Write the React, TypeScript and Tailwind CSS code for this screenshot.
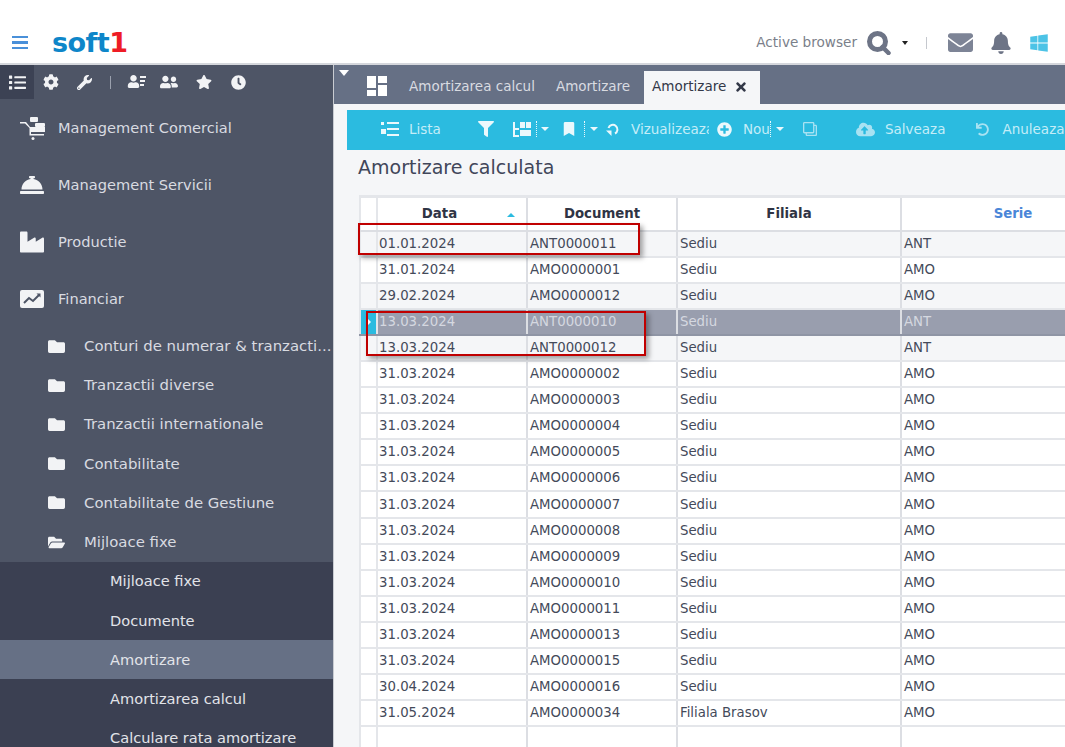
import type { ReactNode } from 'react'
import {
  FaBell,
  FaBookmark,
  FaClock,
  FaCloudUploadAlt,
  FaCog,
  FaConciergeBell,
  FaEnvelope,
  FaFilter,
  FaFolder,
  FaFolderOpen,
  FaIndustry,
  FaList,
  FaPlusCircle,
  FaRegClone,
  FaStar,
  FaTimes,
  FaUndo,
  FaUser,
  FaUserFriends,
  FaWindows,
  FaWrench,
} from 'react-icons/fa'

const rows = [
  ['01.01.2024', 'ANT0000011', 'Sediu', 'ANT'],
  ['31.01.2024', 'AMO0000001', 'Sediu', 'AMO'],
  ['29.02.2024', 'AMO0000012', 'Sediu', 'AMO'],
  ['13.03.2024', 'ANT0000010', 'Sediu', 'ANT'],
  ['13.03.2024', 'ANT0000012', 'Sediu', 'ANT'],
  ['31.03.2024', 'AMO0000002', 'Sediu', 'AMO'],
  ['31.03.2024', 'AMO0000003', 'Sediu', 'AMO'],
  ['31.03.2024', 'AMO0000004', 'Sediu', 'AMO'],
  ['31.03.2024', 'AMO0000005', 'Sediu', 'AMO'],
  ['31.03.2024', 'AMO0000006', 'Sediu', 'AMO'],
  ['31.03.2024', 'AMO0000007', 'Sediu', 'AMO'],
  ['31.03.2024', 'AMO0000008', 'Sediu', 'AMO'],
  ['31.03.2024', 'AMO0000009', 'Sediu', 'AMO'],
  ['31.03.2024', 'AMO0000010', 'Sediu', 'AMO'],
  ['31.03.2024', 'AMO0000011', 'Sediu', 'AMO'],
  ['31.03.2024', 'AMO0000013', 'Sediu', 'AMO'],
  ['31.03.2024', 'AMO0000015', 'Sediu', 'AMO'],
  ['30.04.2024', 'AMO0000016', 'Sediu', 'AMO'],
  ['31.05.2024', 'AMO0000034', 'Filiala Brasov', 'AMO'],
  ['', '', '', ''],
]

const folders = ['Conturi de numerar & tranzacti...', 'Tranzactii diverse', 'Tranzactii internationale', 'Contabilitate', 'Contabilitate de Gestiune']
const subItems = ['Mijloace fixe', 'Documente', 'Amortizare', 'Amortizarea calcul', 'Calculare rata amortizare']

function CartIcon() {
  return (
    <svg viewBox="0 0 26 24" className="w-[26px] h-[24px] fill-[#f2f3f5]">
      <path d="M0 6h6l4 5h15v5H11v2h13v1.6H9.5V12L5 7.6H0z" />
      <rect x="10" y="1" width="8" height="5" rx="1" />
      <rect x="15" y="7" width="10" height="4" rx="1" />
      <circle cx="13" cy="22.5" r="1.5" />
    </svg>
  )
}

function ChartIcon() {
  return (
    <svg viewBox="0 0 24 18" className="w-[24px] h-[18px]">
      <rect width="24" height="18" rx="2" className="fill-[#f2f3f5]" />
      <path d="M4 13l5-5 4 3 6-6" className="fill-none stroke-[#4e5566] stroke-2" />
      <path d="M20.5 3.5v4l-4-4z" className="fill-[#4e5566]" />
    </svg>
  )
}

function SearchIcon() {
  return (
    <svg viewBox="0 0 24 24" className="ml-[10px] w-[24px] h-[24px] shrink-0">
      <circle cx="10.5" cy="10.5" r="8" className="fill-none stroke-[#6d7486] stroke-[5]" />
      <path d="M15.5 16l6 6" className="fill-none stroke-[#6d7486] stroke-[4.5] [stroke-linecap:round]" />
    </svg>
  )
}

function RefreshIcon() {
  return (
    <svg viewBox="0 0 14 14" className="ml-[8px] w-[14px] h-[14px] shrink-0">
      <path d="M2.5 6a4.6 4.6 0 1 1 6.5 5.5" className="fill-none stroke-[#eaf8fc] stroke-2" />
      <path d="M0 8.5h5.5V14z" className="fill-[#eaf8fc]" />
    </svg>
  )
}

function UserListIcon() {
  return (
    <span className="relative w-[19px] h-[14px] flex">
      <FaUser className="text-[13px] text-[#f2f3f5]" />
      <span className="absolute left-[13px] top-[1px] flex flex-col gap-[2px]">
        <span className="w-[6px] h-[2px] bg-[#f2f3f5]" />
        <span className="w-[5px] h-[2px] bg-[#f2f3f5]" />
        <span className="w-[4px] h-[2px] bg-[#f2f3f5]" />
      </span>
    </span>
  )
}

function MenuItem({ icon, label }: { icon: ReactNode; label: string }) {
  return (
    <div className="h-[57px] flex items-center text-[#d9dbe1]">
      <span className="w-[58px] pl-[20px] flex">{icon}</span>
      <span className="text-[14.6px] whitespace-nowrap">{label}</span>
    </div>
  )
}

function FolderItem({ label, open }: { label: string; open?: boolean }) {
  return (
    <div className="h-[39.2px] flex items-center text-[#d9dbe1]">
      <span className="w-[84px] pl-[48px] flex text-[#f2f3f5] text-[17px]">{open ? <FaFolderOpen /> : <FaFolder />}</span>
      <span className="text-[14.9px] whitespace-nowrap">{label}</span>
    </div>
  )
}

function Sidebar() {
  return (
    <aside className="w-[333px] shrink-0 bg-[#4e5566] overflow-hidden">
      <div className="h-[34px] flex items-center text-[#f2f3f5]">
        <span className="w-[34px] h-[34px] bg-[#3c4254] flex items-center justify-center text-[17px]"><FaList /></span>
        <span className="ml-[9px] text-[16px]"><FaCog /></span>
        <span className="ml-[18px] text-[15px]"><FaWrench /></span>
        <span className="ml-[18px] w-[1px] h-[13px] bg-[#9aa0ad]" />
        <span className="ml-[16px]"><UserListIcon /></span>
        <span className="ml-[14px] text-[18px]"><FaUserFriends /></span>
        <span className="ml-[18px] text-[16px]"><FaStar /></span>
        <span className="ml-[19px] text-[15px]"><FaClock /></span>
      </div>
      <MenuItem icon={<CartIcon />} label="Management Comercial" />
      <MenuItem icon={<FaConciergeBell className="text-[24px] text-[#f2f3f5]" />} label="Management Servicii" />
      <MenuItem icon={<FaIndustry className="text-[24px] text-[#f2f3f5]" />} label="Productie" />
      <MenuItem icon={<ChartIcon />} label="Financiar" />
      <div className="-mt-[0.4px]">
        {folders.map((f) => (
          <FolderItem key={f} label={f} />
        ))}
        <FolderItem label="Mijloace fixe" open />
      </div>
      <div className="bg-[#3b4052]">
        {subItems.map((s) => (
          <div
            key={s}
            className={`h-[39.2px] pl-[110px] flex items-center text-[14.6px] text-[#e2e4e9] whitespace-nowrap ${s === 'Amortizare' ? 'bg-[#667085]' : ''}`}
          >
            {s}
          </div>
        ))}
      </div>
    </aside>
  )
}

function Caret({ className }: { className: string }) {
  return <span className={`w-0 h-0 shrink-0 border-x-[4px] border-x-transparent border-t-[4px] ${className}`} />
}

function Toolbar() {
  return (
    <div className="ml-[13px] mt-[6px] h-[40px] pb-[2px] bg-[#2bbbe0] flex items-center text-[#c4edf8] text-[13.5px] whitespace-nowrap overflow-hidden">
      <svg viewBox="0 0 18 15" className="ml-[34px] w-[18px] h-[15px] fill-[#eaf8fc] shrink-0">
        <rect x="0" y="0" width="3" height="3" />
        <rect x="6" y="0" width="12" height="2" />
        <rect x="6" y="6" width="12" height="2" />
        <rect x="6" y="12" width="12" height="2" />
        <path d="M0 7h5v5H0z" />
      </svg>
      <span className="ml-[10px] w-[30px]">Lista</span>
      <FaFilter className="ml-[39px] text-[16px] text-[#eaf8fc] shrink-0" />
      <svg viewBox="0 0 18 15" className="ml-[19px] w-[18px] h-[15px] fill-[#eaf8fc] shrink-0">
        <path d="M0 0h2v6h4v2H2v5h4v2H0z" />
        <rect x="7" y="0" width="5" height="6" />
        <rect x="13" y="0" width="5" height="6" />
        <rect x="7" y="8" width="11" height="6" />
      </svg>
      <span className="ml-[5px] h-[16px] border-l border-dotted border-[#eaf8fc]" />
      <Caret className="ml-[4px] border-t-[#eaf8fc]" />
      <FaBookmark className="ml-[13px] text-[14px] text-[#eaf8fc] shrink-0" />
      <span className="ml-[8px] h-[16px] border-l border-dotted border-[#eaf8fc]" />
      <Caret className="ml-[5px] border-t-[#eaf8fc]" />
      <RefreshIcon />
      <span className="ml-[11px] w-[78px] shrink-0 overflow-hidden">Vizualizeaza</span>
      <FaPlusCircle className="ml-[8px] text-[15px] text-[#eaf8fc] shrink-0" />
      <span className="ml-[11px]">Nou</span>
      <span className="h-[16px] border-l border-dotted border-[#eaf8fc]" />
      <Caret className="ml-[5px] border-t-[#eaf8fc]" />
      <FaRegClone className="ml-[19px] text-[14px] text-[#a8e2f2] shrink-0 -scale-x-100" />
      <FaCloudUploadAlt className="ml-[39px] text-[19px] text-[#a8e2f2] shrink-0" />
      <span className="ml-[10px]">Salveaza</span>
      <FaUndo className="ml-[31px] text-[13px] text-[#a8e2f2] shrink-0" />
      <span className="ml-[13px]">Anuleaza</span>
    </div>
  )
}

function Grid() {
  return (
    <div className="relative ml-[25px] mt-[16px] w-[800px] border-t-[3px] border-[#e4e6ea] text-[13.3px] text-[#444a5a]">
      <div className="h-[34px] flex bg-white border-b-[2px] border-[#dcdee3] font-bold text-[#2f3444]">
        <div className="w-[19px] border-x-[2px] border-[#e4e6ea] shrink-0" />
        <div className="w-[150px] relative flex items-center justify-center border-r-[2px] border-[#dcdee3] pr-[25px]">
          Data
          <span className="absolute right-[11px] top-[15px] w-0 h-0 border-x-[4px] border-x-transparent border-b-[4px] border-b-[#2bbbe0]" />
        </div>
        <div className="w-[150px] flex items-center justify-center border-r-[2px] border-[#dcdee3]">Document</div>
        <div className="w-[224px] flex items-center justify-center border-r-[2px] border-[#dcdee3]">Filiala</div>
        <div className="w-[222px] flex items-center justify-center text-[#4a86d8]">Serie</div>
      </div>
      {rows.map((r, i) => {
        const selected = i === 3
        const bg = selected ? 'bg-[#999eae] text-[#d5d8e0]' : i % 2 === 0 && i < 5 ? 'bg-[#f5f6f8]' : 'bg-white'
        return (
          <div key={i} className={`h-[26.05px] flex border-b-[2px] ${selected ? 'border-[#8f95a5]' : 'border-[#e4e6ea]'} ${bg}`}>
            <div className={`w-[19px] shrink-0 border-x-[2px] border-[#e4e6ea] flex items-center justify-center ${selected ? 'bg-[#2bbbe0] border-[#2bbbe0]' : ''}`}>
              {selected && <span className="w-0 h-0 border-y-[4px] border-y-transparent border-l-[4px] border-l-white" />}
            </div>
            <div className="w-[150px] pl-[1px] flex items-center border-r-[2px] border-[#dcdee3]">{r[0]}</div>
            <div className="w-[150px] pl-[2px] flex items-center border-r-[2px] border-[#dcdee3]">{r[1]}</div>
            <div className="w-[224px] pl-[2px] flex items-center border-r-[2px] border-[#dcdee3]">{r[2]}</div>
            <div className="w-[222px] pl-[2px] flex items-center">{r[3]}</div>
          </div>
        )
      })}
      <div className="absolute left-[-1px] top-[25px] w-[282px] h-[32px] border-[2px] border-[#c00000] shadow-[3px_3px_5px_rgba(0,0,0,0.35)]" />
      <div className="absolute left-[7px] top-[113px] w-[280px] h-[45px] border-[2px] border-[#c00000] shadow-[3px_3px_5px_rgba(0,0,0,0.35)]" />
    </div>
  )
}

export default function App() {
  return (
    <div className="w-[1065px] h-[747px] overflow-hidden flex flex-col bg-white font-['DejaVu_Sans',sans-serif]">
      <header className="h-[65px] shrink-0 flex items-center pt-[22px] border-b-[2px] border-[#d5d7dc]">
        <span className="ml-[12px] flex flex-col gap-[3px]">
          <span className="w-[16px] h-[2.5px] bg-[#4a90d9]" />
          <span className="w-[16px] h-[2.5px] bg-[#4a90d9]" />
          <span className="w-[16px] h-[2.5px] bg-[#4a90d9]" />
        </span>
        <span className="ml-[24px] w-[74px] text-[27px] leading-none font-bold tracking-[-0.5px] text-[#0e86c9] whitespace-nowrap">
          soft<span className="text-[#ee1c25]">1</span>
        </span>
        <span className="ml-auto text-[13.6px] text-[#7b7f8a] whitespace-nowrap">Active browser</span>
        <SearchIcon />
        <span className="ml-[11px] w-0 h-0 border-x-[3px] border-x-transparent border-t-[4px] border-t-[#222]" />
        <span className="ml-[18px] w-[1px] h-[12px] bg-[#c5c8ce]" />
        <FaEnvelope className="ml-[21px] text-[25px] text-[#7d8496]" />
        <FaBell className="ml-[17px] text-[22px] text-[#6d7486]" />
        <FaWindows className="ml-[17px] mr-[16px] text-[20px] text-[#4cc3e6]" />
      </header>
      <div className="flex-1 flex min-h-0">
        <Sidebar />
        <main className="flex-1 min-w-0 bg-[#f5f6f8] border-l-[1px] border-[#c9ccd2] overflow-hidden">
          <div className="h-[39px] bg-[#667085] flex items-end relative text-[13.5px] whitespace-nowrap">
            <Caret className="absolute left-[5px] top-[5px] border-x-[5px] border-t-[6px] border-t-white" />
            <svg viewBox="0 0 20 20" className="ml-[33px] mb-[8px] w-[20px] h-[20px] fill-white shrink-0">
              <rect x="0" y="0" width="9" height="12" />
              <rect x="11" y="0" width="9" height="7" />
              <rect x="0" y="14" width="9" height="6" />
              <rect x="11" y="9" width="9" height="11" />
            </svg>
            <span className="ml-[22px] mb-[8px] text-[#d9dbe1]">Amortizarea calcul</span>
            <span className="ml-[21px] mb-[8px] text-[#d9dbe1]">Amortizare</span>
            <div className="ml-[14px] w-[116px] h-[33px] bg-[#f5f6f8] flex items-center pl-[8px] pb-[2px] text-[#333848]">
              Amortizare
              <FaTimes className="ml-[8px] text-[14px] text-[#333848]" />
            </div>
          </div>
          <Toolbar />
          <h1 className="ml-[24px] mt-[5px] text-[19px] leading-[24px] font-normal text-[#41465a]">Amortizare calculata</h1>
          <Grid />
        </main>
      </div>
    </div>
  )
}
